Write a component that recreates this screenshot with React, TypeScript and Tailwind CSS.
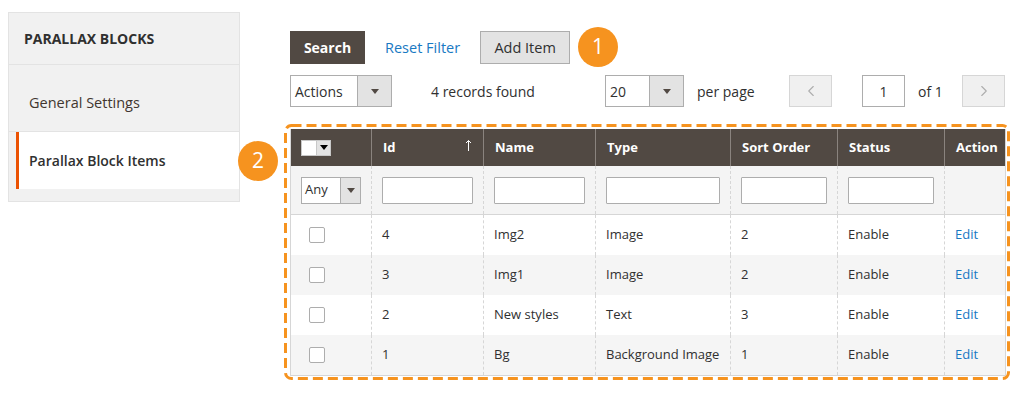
import { ChevronLeft, ChevronRight } from "lucide-react";

const rows = [
  { id: 4, name: "Img2", type: "Image", sort: 2, status: "Enable" },
  { id: 3, name: "Img1", type: "Image", sort: 2, status: "Enable" },
  { id: 2, name: "New styles", type: "Text", sort: 3, status: "Enable" },
  { id: 1, name: "Bg", type: "Background Image", sort: 1, status: "Enable" },
];

const cols = "grid grid-cols-[80px_112px_112px_135px_107px_107px_61px]";

function Caret() {
  return <span className="block h-0 w-0 border-x-[4px] border-t-[5px] border-x-transparent border-t-[#514943]" />;
}

function Badge({ n, className }: { n: string; className: string }) {
  return (
    <span
      className={`absolute flex h-[40px] w-[40px] items-center justify-center rounded-full bg-[#f6931f] text-[21px] text-white ${className}`}
    >
      {n}
    </span>
  );
}

function FilterInput({ w }: { w: string }) {
  return <div className={`h-[27px] rounded-[1px] border border-[#adadad] bg-white ${w}`} />;
}

export default function App() {
  return (
    <div className="relative flex h-[394px] w-[1024px] bg-white pl-[8px] pt-[12px] font-['Open_Sans',sans-serif] text-[#303030]">
      {/* Sidebar */}
      <aside className="h-[190px] w-[232px] border border-[#e3e3e3] bg-[#f1f1f1]">
        <div className="flex h-[52px] items-center border-b border-[#e3e3e3] pl-[15px] text-[14px] font-bold uppercase text-[#303030]">
          Parallax Blocks
        </div>
        <div className="flex h-[67px] items-center border-b border-[#e3e3e3] pl-[20px] pt-[10px] text-[14.5px] text-[#41362f]">
          General Settings
        </div>
        <div className="ml-[7px] flex h-[57px] items-center border-l-[3px] border-[#eb5202] bg-white pl-[10px] text-[14px] font-semibold text-[#303030]">
          Parallax Block Items
        </div>
      </aside>

      {/* Main */}
      <main className="ml-[44px] pt-[19px]">
        <div className="flex h-[33px] items-center pl-[6px] text-[14px]">
          <button className="h-[33px] w-[75px] bg-[#514943] font-bold text-white">Search</button>
          <span className="ml-[20px] text-[14.5px] text-[#1979c3]">Reset Filter</span>
          <button className="ml-[20px] h-[33px] w-[90px] border border-[#adadad] bg-[#e3e3e3] text-[14.5px] text-[#303030]">
            Add Item
          </button>
        </div>

        <div className="mt-[11px] flex h-[32px] items-center pl-[6px] text-[14px]">
          <div className="flex h-[32px] w-[102px] border border-[#adadad] bg-white">
            <span className="flex flex-1 items-center pl-[4px]">Actions</span>
            <span className="flex w-[34px] items-center justify-center border-l border-[#adadad] bg-[#e3e3e3]">
              <Caret />
            </span>
          </div>
          <span className="ml-[39px] w-[174px]">4 records found</span>
          <div className="flex h-[32px] w-[79px] border border-[#adadad] bg-white">
            <span className="flex flex-1 items-center pl-[4px]">20</span>
            <span className="flex w-[34px] items-center justify-center border-l border-[#adadad] bg-[#e3e3e3]">
              <Caret />
            </span>
          </div>
          <span className="ml-[13px] w-[92px]">per page</span>
          <span className="flex h-[32px] w-[43px] items-center justify-center border border-[#d6d6d6] bg-[#f0f0f0] text-[#adadad]">
            <ChevronLeft size={18} strokeWidth={1.5} />
          </span>
          <span className="ml-[30px] flex h-[32px] w-[43px] items-center justify-center border border-[#adadad] bg-white">
            1
          </span>
          <span className="ml-[13px] w-[44px]">of 1</span>
          <span className="flex h-[32px] w-[43px] items-center justify-center border border-[#d6d6d6] bg-[#f0f0f0] text-[#adadad]">
            <ChevronRight size={18} strokeWidth={1.5} />
          </span>
        </div>

        {/* Grid with dashed annotation frame */}
        <div className="relative mt-[17px] h-[256px] w-[726px] pl-[6px] pt-[5px]">
          <svg className="absolute left-0 top-0" width="726" height="256">
            <rect
              x="1.5"
              y="1.5"
              width="723"
              height="253"
              rx="6"
              fill="none"
              stroke="#f6931f"
              strokeWidth="3"
              strokeDasharray="10 5"
            />
          </svg>
          <div className="w-[716px] border-x border-b border-[#d6d6d6] text-[13px]">
            <div className={`${cols} h-[37px] bg-[#514943] font-bold text-white`}>
              <div className="flex items-center pl-[10px]">
                <div className="flex h-[16px] w-[30px] border border-[#c8c8c8]">
                  <span className="w-[14px] bg-white" />
                  <span className="flex flex-1 items-center justify-center border-l border-[#c8c8c8] bg-[#e3e3e3]">
                    <span className="block h-0 w-0 border-x-[4px] border-t-[5px] border-x-transparent border-t-black" />
                  </span>
                </div>
              </div>
              <div className="relative flex items-center border-l border-[#8a837e] pl-[11px]">
                Id
                <svg className="absolute right-[11px] top-[10px]" width="7" height="12" viewBox="0 0 7 12">
                  <path d="M3.5 1.5V12M1 4l2.5-2.5L6 4" fill="none" stroke="white" strokeWidth="1" />
                </svg>
              </div>
              {["Name", "Type", "Sort Order", "Status", "Action"].map((h) => (
                <div key={h} className="flex items-center border-l border-[#8a837e] pl-[11px]">
                  {h}
                </div>
              ))}
            </div>

            <div className={`${cols} h-[49px] border-b border-[#d6d6d6] bg-[#f4f4f4]`}>
              <div className="flex items-center pl-[10px]">
                <div className="flex h-[27px] w-[60px] border border-[#adadad] bg-white">
                  <span className="flex flex-1 items-center pl-[3px]">Any</span>
                  <span className="flex w-[20px] items-center justify-center border-l border-[#adadad] bg-[#e3e3e3]">
                    <Caret />
                  </span>
                </div>
              </div>
              <div className="flex items-center border-l border-dashed border-[#d6d6d6] pl-[10px]">
                <FilterInput w="w-[91px]" />
              </div>
              <div className="flex items-center border-l border-dashed border-[#d6d6d6] pl-[10px]">
                <FilterInput w="w-[91px]" />
              </div>
              <div className="flex items-center border-l border-dashed border-[#d6d6d6] pl-[10px]">
                <FilterInput w="w-[114px]" />
              </div>
              <div className="flex items-center border-l border-dashed border-[#d6d6d6] pl-[10px]">
                <FilterInput w="w-[86px]" />
              </div>
              <div className="flex items-center border-l border-dashed border-[#d6d6d6] pl-[10px]">
                <FilterInput w="w-[86px]" />
              </div>
              <div className="border-l border-dashed border-[#d6d6d6]" />
            </div>

            {rows.map((r, i) => (
              <div key={r.id} className={`${cols} h-[40px] ${i % 2 ? "bg-[#f5f5f5]" : "bg-white"}`}>
                <div className="flex items-center pl-[18px]">
                  <span className="h-[16px] w-[16px] rounded-[2px] border border-[#adadad] bg-white" />
                </div>
                <div className="flex items-center border-l border-dashed border-[#d6d6d6] pl-[10px]">{r.id}</div>
                <div className="flex items-center border-l border-dashed border-[#d6d6d6] pl-[10px]">{r.name}</div>
                <div className="flex items-center border-l border-dashed border-[#d6d6d6] pl-[10px]">{r.type}</div>
                <div className="flex items-center border-l border-dashed border-[#d6d6d6] pl-[10px]">{r.sort}</div>
                <div className="flex items-center border-l border-dashed border-[#d6d6d6] pl-[10px]">{r.status}</div>
                <div className="flex items-center border-l border-dashed border-[#d6d6d6] pl-[10px] text-[#1979c3]">
                  Edit
                </div>
              </div>
            ))}
          </div>
        </div>
      </main>

      <Badge n="1" className="left-[578px] top-[27px]" />
      <Badge n="2" className="left-[238px] top-[141px]" />
    </div>
  );
}
